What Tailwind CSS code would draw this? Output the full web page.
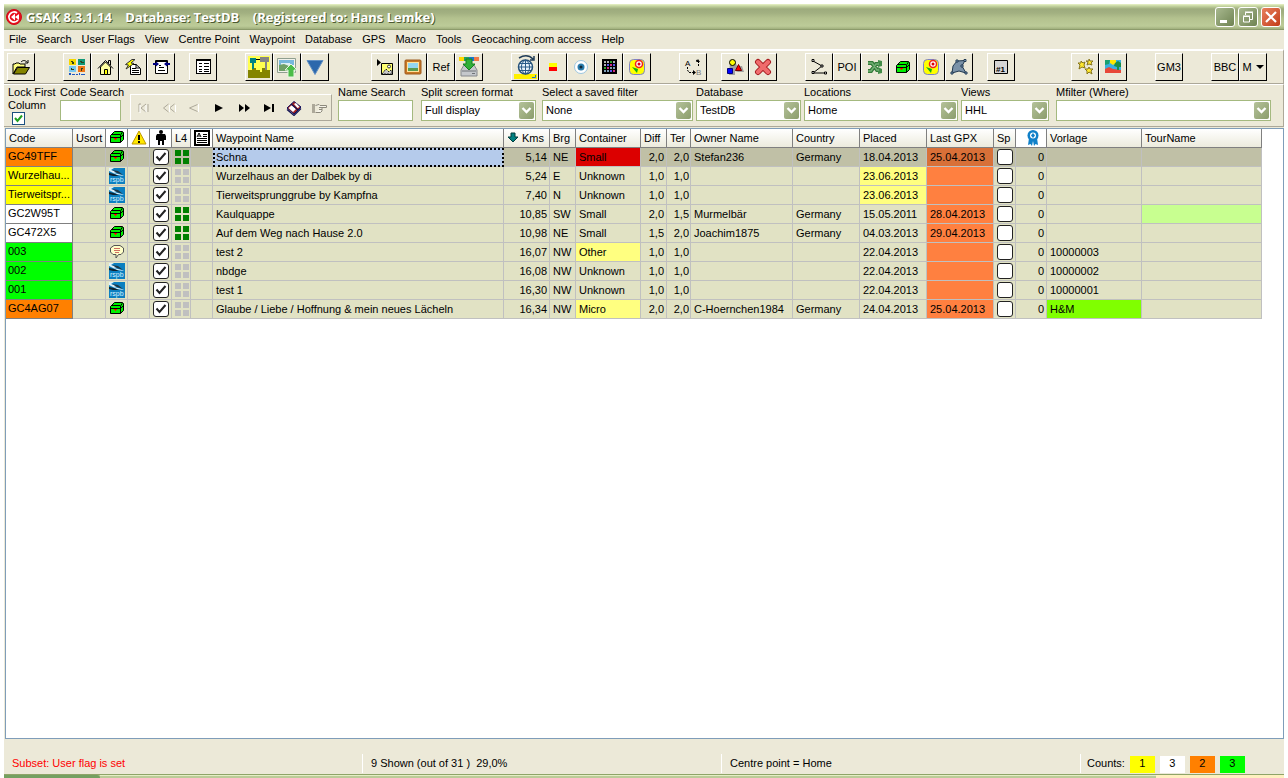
<!DOCTYPE html>
<html lang="en">

<head>
    <meta charset="UTF-8">
    <meta name="viewport" content="width=device-width, initial-scale=1.0">
    <title>GSAK 8.3.1.14 - TestDB</title>
    <script src="https://cdn.jsdelivr.net/npm/@tailwindcss/browser@4"></script>
</head>

<body class="bg-white h-screen overflow-hidden flex flex-col text-[11px] leading-[13px] text-black font-['Liberation_Sans',Arial,sans-serif]">

    <!-- Shared icons -->
    <svg class="hidden" aria-hidden="true">
        <symbol id="chest" viewBox="0 0 16 16">
            <path d="M1.500 5.500L5.500 1.500H13.500L14.500 2.500V9.500L11.500 12.500H1.500Z" fill="#00f000" stroke="#000" />
            <path d="M1.500 7.500H11.500L14.500 4.500M11.500 12.500V5L13.500 2M2 4.500H11" fill="none" stroke="#000" />
            <path d="M5 8H8V9H7V10H6V9H5Z" fill="#f00" />
        </symbol>
        <symbol id="rspb" viewBox="0 0 16 16">
            <rect width="16" height="16" fill="#0c7fc0" />
            <path d="M0 0H5L2 2L8 4L5 5L13 7L15 8L8 7L0 3Z" fill="#dff0fa" />
            <path d="M0 5L5 6L10 8L4 8L0 7Z" fill="#10222e" />
            <path d="M3 2L9 3L14 7L8 5Z" fill="#223642" />
            <text x="1" y="14" font-size="7" font-family="Liberation Sans" fill="#d8f2ff">rspb</text>
        </symbol>
        <symbol id="note" viewBox="0 0 16 16">
            <path d="M5 1.500H11L14.500 4V8L12 10.500H9.500L7 14V10.500H4L1.500 8V4Z" fill="#ffffc8" stroke="#555" />
            <path d="M5 4.500H11M5 6.500H11M6 8.500H10" stroke="#d07060" />
        </symbol>
        <symbol id="attrs" viewBox="0 0 14 14">
            <path d="M0 0H6V6H0ZM8 0H14V6H8ZM0 8H6V14H0ZM8 8H14V14H8Z" fill="currentColor" />
        </symbol>
        <symbol id="tick" viewBox="0 0 16 16">
            <path d="M3.500 7.500L6.500 11L12.500 4" fill="none" stroke="#222" stroke-width="2" />
        </symbol>
        <symbol id="chevron" viewBox="0 0 15 17">
            <path d="M3.500 6L7.500 10L11.500 6" fill="none" stroke="#fff" stroke-width="2.400" />
        </symbol>
        <symbol id="map" viewBox="1 1 26 26">
            <rect x="6.500" y="6.500" width="15" height="15" rx="4" fill="#ff0" stroke="#7d82c8" />
            <circle cx="16" cy="11" r="3.500" fill="#fff" stroke="#f02020" stroke-width="1.500" />
            <circle cx="16" cy="11" r="1.500" fill="#e00000" />
            <path d="M9 14L15 16L14 20Z" fill="#10b010" />
        </symbol>
    </svg>

    <main class="mx-1 mt-1 flex-1 min-h-0 flex flex-col bg-[#ece9d8]">

        <!-- Title bar -->
        <header class="h-[26px] shrink-0 flex items-center pl-[2px] pr-[3px] border-b border-[#8c9b6b] bg-[linear-gradient(#e9f3c8_0px,#c5d5a0_2px,#9dab7d_5px,#a2b081_9px,#b3c18e_14px,#bccb98_22px,#96a574_26px)]">
            <svg class="size-4 mr-1" viewBox="0 0 16 16" aria-hidden="true">
                <circle cx="8" cy="8" r="7.500" fill="#e8101c" stroke="#d00818" />
                <path d="M11 4A5 5 0 1 0 12 11" fill="none" stroke="#fff" stroke-width="1.800" />
                <path d="M5 8L9 4.500V11.500ZM9 8L13 5V11Z" fill="#fff" />
            </svg>
            <h1 class="flex-1 whitespace-pre text-white font-bold text-[13px] leading-4 font-['Open_Sans',sans-serif] [text-shadow:1px_1px_#4c5a30]">GSAK 8.3.1.14    Database: TestDB    (Registered to: Hans Lemke)</h1>
            <div class="flex gap-[3px]">
                <button aria-label="Minimize" class="size-5 rounded-[3px] border border-white bg-linear-to-br from-[#a9b990] to-[#6f8352]">
                    <svg class="size-[18px]" viewBox="0 0 18 18"><path d="M4 12H11V15H4Z" fill="#fff" /></svg>
                </button>
                <button aria-label="Restore" class="size-5 rounded-[3px] border border-white bg-linear-to-br from-[#a9b990] to-[#6f8352]">
                    <svg class="size-[18px]" viewBox="0 0 18 18"><path d="M6.500 7V4.500H13.500V11.500H11M4.500 8.500H10.500V14H4.500ZM4 8H11M6 4H14" fill="none" stroke="#fff" /></svg>
                </button>
                <button aria-label="Close" class="size-5 rounded-[3px] border border-white bg-linear-to-br from-[#e8805c] to-[#c23a12]">
                    <svg class="size-[18px]" viewBox="0 0 18 18"><path d="M4 4L14 14M14 4L4 14" stroke="#fff" stroke-width="2.200" /></svg>
                </button>
            </div>
        </header>

        <!-- Menu -->
        <nav class="h-[19px] shrink-0 flex items-center gap-[10px] pl-[5px]">
            <a href="#">File</a>
            <a href="#">Search</a>
            <a href="#">User Flags</a>
            <a href="#">View</a>
            <a href="#">Centre Point</a>
            <a href="#">Waypoint</a>
            <a href="#">Database</a>
            <a href="#">GPS</a>
            <a href="#">Macro</a>
            <a href="#">Tools</a>
            <a href="#">Geocaching.com access</a>
            <a href="#">Help</a>
        </nav>

        <!-- Toolbar -->
        <div class="h-[35px] shrink-0 flex pt-[2px] pl-[3px] border-t-2 border-r border-b border-t-white border-r-[#aca899] border-b-[#aca899] *:flex *:shrink-0 [&_button]:size-7 [&_button]:border [&_button]:border-t-white [&_button]:border-l-white [&_button]:border-r-black [&_button]:border-b-black [&_svg]:size-[26px]">
            <div>
                <button aria-label="Open database">
                    <svg viewBox="1 1 26 26"><path d="M6 11H8L9 10H12L13 11H18V14H10L6 21Z" fill="#ffff80" stroke="#000" /><path d="M6.500 21L10.500 14.500H22.500L18.500 21Z" fill="#848400" stroke="#000" /><path d="M14 9C16 7 18 7 20.500 9.500M21 7V10H18" fill="none" stroke="#000" /></svg>
                </button>
            </div>
            <div class="ml-7">
                <button aria-label="Geocaching.com">
                    <svg viewBox="1 1 26 26"><path d="M6 6H13V12H6Z" fill="#f5d800" /><path d="M15 6H22V12H15Z" fill="#109878" /><path d="M6 13H13V19H6Z" fill="#78c8f0" /><path d="M15 13H22V19H15Z" fill="#f07818" /><path d="M8 8H10V9H11V11H9V9H8ZM17 8H19V9H21V10H18V9H17ZM8 15H9V16H11V17H8ZM18 15H20V16H19V18H18Z" fill="#30401c" /><path d="M6 20H8V22H6ZM9 21H12V22H9ZM13 21H15V22H13ZM16 20H17V22H16ZM18 21H22V22H18Z" fill="#2058c0" /></svg>
                </button>
                <button aria-label="Home">
                    <svg viewBox="1 1 26 26"><path d="M9.500 14V21.500H19.500V14L14.500 9Z" fill="#ffffa0" stroke="#000" /><path d="M7 15.500L14.500 7.500L22 15.500M17.500 10V7.500H19.500V12" fill="none" stroke="#000" /><path d="M13.500 16.500H16.500V21.500H13.500Z" fill="#ff0" stroke="#000" /></svg>
                </button>
                <button aria-label="Quick page">
                    <svg viewBox="1 1 26 26"><path d="M11.500 11.500H17L21.500 15.500V21.500H11.500Z" fill="#fff" stroke="#000" /><path d="M13 15.500H17M13 17.500H20M13 19.500H20M17 11V15H21" fill="none" stroke="#000" /><path d="M13 6.500L6.500 11.500L9.500 12L7 16L15 10.500L12 10L16 6.500Z" fill="#ff0" stroke="#333" /></svg>
                </button>
                <button aria-label="Resize columns">
                    <svg viewBox="1 1 26 26"><path d="M8.500 7.500H20.500V20.500H8.500Z" fill="#fff" stroke="#000" /><path d="M8 8.500H21M12 14.500H17M11 17.500H18M12 12.500H14" stroke="#000" /><path d="M6 10H9V8.500L12 11L9 13.500V12H6ZM23 10H20V8.500L17 11L20 13.500V12H23Z" fill="#000084" /></svg>
                </button>
            </div>
            <div class="ml-[14px]">
                <button aria-label="Grid list">
                    <svg viewBox="1 1 26 26" shape-rendering="crispEdges"><path d="M7.500 6.500H21.500V20.500H7.500Z" fill="#fff" stroke="#000" /><path d="M7 7.500H22M10 10.500H13M15 10.500H20M10 13.500H13M15 13.500H20M10 16.500H13M15 16.500H20M10 18.500H13M15 18.500H20" stroke="#000" /></svg>
                </button>
            </div>
            <div class="ml-7">
                <button aria-label="Waypoint route">
                    <svg viewBox="1 1 26 26" shape-rendering="crispEdges"><path d="M3 3H25V25H3Z" fill="#ffff50" /><path d="M3 17H7V15H11V17H15V19H17V15H20V17H25V25H3Z" fill="#848400" /><path d="M5 5H11V10H9V16H7V10H5Z" fill="#008484" /><path d="M11 6H15V7H11Z" fill="#000" /><path d="M15 4H24V9H22V17H20V9H15Z" fill="#848484" /></svg>
                </button>
                <button aria-label="Upload picture">
                    <svg viewBox="1 1 26 26"><path d="M4.500 5.500H22.500V19.500H4.500Z" fill="#f2f2ea" stroke="#8f9f90" /><path d="M6 7H21V12H6Z" fill="#78b8dc" /><path d="M8 10H17V12H8Z" fill="#dff0f5" /><path d="M6 12L11 11L21 15V18H6Z" fill="#70a068" /><path d="M18 11L24 17H21V24H15V17H12Z" fill="#4cbc48" stroke="#e6f5e2" /></svg>
                </button>
                <button aria-label="Filter">
                    <svg viewBox="1 1 26 26"><path d="M6 7.500H22L14 21.500Z" fill="#2c68ac" stroke="#6190c4" /></svg>
                </button>
            </div>
            <div class="ml-[42px]">
                <button aria-label="Play image">
                    <svg viewBox="1 1 26 26"><path d="M6 6L10 9.500L6 13Z" fill="#000" /><path d="M10.500 10.500H21.500V21.500H10.500Z" fill="#ffff70" stroke="#000" /><path d="M11 21L15 16L18 19L20 17L21 18V21Z" fill="#c8c8c8" stroke="#222" stroke-dasharray="2 1" /><circle cx="18" cy="13.500" r="1.500" fill="#fff" stroke="#333" /></svg>
                </button>
                <button aria-label="Image frame">
                    <svg viewBox="1 1 26 26"><rect x="6" y="7" width="16" height="14" rx="1" fill="#c87824" stroke="#9c581c" /><path d="M8 9H20V19H8Z" fill="#ffe29c" /><path d="M9 10H19V15H9Z" fill="#94d6f0" /><path d="M9 15H19V18H9Z" fill="#5a9c50" /></svg>
                </button>
                <button>Ref</button>
                <button aria-label="Download">
                    <svg viewBox="1 1 26 26"><path d="M4 4H9V8H4Z" fill="#ffd800" /><path d="M9 4H14V8H9Z" fill="#20a060" /><path d="M14 4H19V8H14Z" fill="#1878d0" /><path d="M19 4H24V8H19Z" fill="#f07848" /><path d="M9 12H19L22 17V23H6V17Z" fill="#c5c8cc" stroke="#85888c" /><path d="M7 18H21M17 20.500H20" stroke="#707478" /><path d="M11 6H17V11H20L14 17L8 11H11Z" fill="#30b038" stroke="#168020" /></svg>
                </button>
            </div>
            <div class="ml-7">
                <button aria-label="Online map">
                    <svg viewBox="1 1 26 26"><path d="M3 21H26V26H3Z" fill="#fff000" /><circle cx="14.500" cy="14" r="7" fill="#e9f3fb" stroke="#245078" stroke-width="1.500" /><path d="M7.500 14H22M9 10.500H20M9 17.500H20M14.500 7V21M14.500 7C9 10 9 18 14.500 21M14.500 7C20 10 20 18 14.500 21" fill="none" stroke="#285a88" /><path d="M8 5C13 2 18 2 22 6M23 3V7H19" fill="none" stroke="#203c58" stroke-width="1.500" /><path d="M24.500 22V24.500H21" fill="none" stroke="#2070d0" /></svg>
                </button>
                <button aria-label="Flag colour">
                    <svg viewBox="1 1 26 26"><path d="M10 10H18V14H10Z" fill="#ff0" /><path d="M10 14H18V18H10Z" fill="#f00" /></svg>
                </button>
                <button aria-label="Target">
                    <svg viewBox="1 1 26 26"><circle cx="14" cy="14" r="6.500" fill="#fff" stroke="#9cc6e0" /><circle cx="14" cy="14" r="3.500" fill="#2b7eae" /><circle cx="14" cy="14" r="1.500" fill="#102838" /></svg>
                </button>
                <button aria-label="Colour grid">
                    <svg viewBox="1 1 26 26" shape-rendering="crispEdges"><path d="M7 6H22V21H7Z" fill="#000" /><path d="M9 8h2v2h-2zM12 8h2v2h-2zM18 8h2v2h-2zM9 11h2v2h-2z" fill="#b0b0b0" /><path d="M15 8h2v2h-2zM9 14h2v2h-2z" fill="#30a030" /><path d="M12 11h2v2h-2zM18 11h2v2h-2zM15 17h2v2h-2z" fill="#5858f0" /><path d="M15 11h2v2h-2zM12 14h2v2h-2zM18 17h2v2h-2z" fill="#d03080" /><path d="M15 14h2v2h-2zM18 14h2v2h-2zM9 17h2v2h-2zM12 17h2v2h-2z" fill="#80a0b8" /></svg>
                </button>
                <button aria-label="Map"><svg><use href="#map" /></svg></button>
            </div>
            <div class="ml-7">
                <button aria-label="Swap A and B">
                    <svg viewBox="1 1 26 26"><text x="6" y="13" font-size="8" font-family="Liberation Sans" fill="#000">A</text><text x="17" y="22" font-size="8" font-family="Liberation Sans" fill="#777">B</text><path d="M8.500 14V17L10 19.500H14M19.500 13V9L17 7" fill="none" stroke="#000" stroke-dasharray="2 1" /><path d="M14 17L17 19.500L14 22ZM17 9L19 6L21 9Z" fill="#000" /></svg>
                </button>
            </div>
            <div class="ml-[14px]">
                <button aria-label="Shapes">
                    <svg viewBox="1 1 26 26"><path d="M9 9L14 8L16 13H21L23 19H17L14 18V22H8Z" fill="#a0a0a0" /><circle cx="11.500" cy="9.500" r="3" fill="#ff0" stroke="#000" /><path d="M6.500 15.500H11.500V20.500H6.500Z" fill="#00f" stroke="#000080" /><path d="M14.500 17.500L17.500 11.500L20.500 17.500Z" fill="#f00" stroke="#700" /></svg>
                </button>
                <button aria-label="Delete">
                    <svg viewBox="1 1 26 26"><path d="M9 9L19 19M19 9L9 19" stroke="#a81c20" stroke-width="6" stroke-linecap="round" /><path d="M9 9L19 19M19 9L9 19" stroke="#f06c6c" stroke-width="4" stroke-linecap="round" /></svg>
                </button>
            </div>
            <div class="ml-7">
                <button aria-label="Polyline">
                    <svg viewBox="1 1 26 26"><path d="M8 8L17 13L8 20H20" fill="none" stroke="#000" /><path d="M7 6.500H9V8.500H7ZM16 12H18V14H16ZM7 18.500H9V20.500H7ZM19.500 19H21.500V21H19.500Z" fill="#fff" stroke="#000" /></svg>
                </button>
                <button>POI</button>
                <button aria-label="Convert">
                    <svg viewBox="1 1 26 26"><path d="M7 10H11L16 17H18M7 18H10L15 11H18" fill="none" stroke="#327a38" stroke-width="4" /><path d="M17 7L21 8V13L17 14ZM17 14L21 16V20L17 21Z" fill="#428c48" /><path d="M7 10H11L16 17H18M7 18H10L15 11H18" fill="none" stroke="#72b074" stroke-width="1.500" /></svg>
                </button>
                <button aria-label="Cache">
                    <svg viewBox="-5 -6 26 26"><use href="#chest" width="16" height="16" /></svg>
                </button>
                <button aria-label="Map"><svg><use href="#map" /></svg></button>
                <button aria-label="Polygon">
                    <svg viewBox="1 1 26 26"><path d="M7 20L8 13L12 8L20 7.500L17 13L21 20L14 18Z" fill="#7b92a8" stroke="#203850" /><path d="M11 7H13V9H11ZM19 6.500H21V8.500H19ZM16 12H18V14H16ZM20 19H22V21H20ZM6 19H8V21H6Z" fill="#a8c8e8" stroke="#203850" /></svg>
                </button>
            </div>
            <div class="ml-[14px]">
                <button aria-label="Number one">
                    <svg viewBox="1 1 26 26"><path d="M7.500 7.500H20.500V20.500H7.500Z" fill="#d6d6d6" stroke="#000" /><text x="9" y="19" font-size="8" font-weight="bold" font-family="Liberation Sans">#1</text></svg>
                </button>
            </div>
            <div class="ml-14">
                <button aria-label="Favourites">
                    <svg viewBox="1 1 26 26"><g fill="#ffe830" stroke="#86751c"><path d="M10 8L12 10L14 9L13 12L14 15L11 14L8 16L9 12L7 10L10 10Z" /><path d="M18 6L19 8L22 8L20 10L21 12L18 11L16 12L17 9L15 8L18 8Z" /><path d="M18 14L19 16L22 16L20 18L21 21L18 19L16 21L16 18L14 16L17 16Z" /></g></svg>
                </button>
                <button aria-label="Picture">
                    <svg viewBox="1 1 26 26"><path d="M6 7H22V20H6Z" fill="#38b0e0" /><path d="M11 7H17V10L14 12L11 10Z" fill="#ffe800" /><path d="M6 7H11L10 11L6 12Z" fill="#18a070" /><path d="M6 16L10 14L14 16L22 17V20H6Z" fill="#e84838" /><path d="M16 10L19 8L22 10V14H20V17H18V14L15 13Z" fill="#189048" /></svg>
                </button>
            </div>
            <div class="ml-7">
                <button>GM3</button>
            </div>
            <div class="ml-7">
                <button>BBC</button>
                <button class="flex items-center justify-center gap-1">M <span class="border-x-4 border-t-4 border-x-transparent border-t-black"></span></button>
            </div>
        </div>

        <!-- Search and filter row -->
        <div class="h-[43px] shrink-0 flex items-start pt-px pl-1 pr-3 border-t border-r border-b border-t-white border-r-[#aca899] border-b-[#aca899] [&_input]:bg-white [&_select]:bg-white">
            <div class="w-[52px] shrink-0">
                <label for="lockFirst" class="block whitespace-nowrap">Lock First<br>Column</label>
                <div class="relative size-[13px] ml-1">
                    <input id="lockFirst" type="checkbox" checked class="block appearance-none size-[13px] border border-[#1c5180]">
                    <svg class="absolute inset-0 size-[13px] pointer-events-none" viewBox="0 0 13 13"><path d="M3 6L5.500 9L10 3.500" fill="none" stroke="#21a121" stroke-width="2" /></svg>
                </div>
            </div>
            <div class="w-[70px] shrink-0">
                <label for="codeSearch" class="block h-[14px] whitespace-nowrap">Code Search</label>
                <input id="codeSearch" type="text" class="block w-[61px] h-[21px] border border-[#a4b97f] px-1">
            </div>
            <div class="flex mt-2 mr-[6px] h-[27px] border border-t-white border-l-white border-r-[#aca899] border-b-[#aca899] [&_button]:w-[25px] [&_svg]:mx-auto [&_svg]:size-4">
                <button aria-label="First"><svg viewBox="0 0 16 16"><path d="M3 4V12M5 8L10 4M5 8L10 12M12 4V12M3 4H5" fill="none" stroke="#aca899" /><path d="M4 5V13M10 5V12" stroke="#fff" /></svg></button>
                <button aria-label="Page back"><svg viewBox="0 0 16 16"><path d="M7.500 4L2.500 8L7.500 12M13.500 4L8.500 8L13.500 12" fill="none" stroke="#aca899" /><path d="M8.500 5V12M14.500 5V12" stroke="#fff" /></svg></button>
                <button aria-label="Back"><svg viewBox="0 0 16 16"><path d="M11.500 4.500L3.500 8L11.500 11.500" fill="none" stroke="#aca899" /><path d="M12.500 4V12" stroke="#fff" /></svg></button>
                <button aria-label="Next"><svg viewBox="0 0 16 16"><path d="M4 4L12 8L4 12Z" /></svg></button>
                <button aria-label="Page forward"><svg viewBox="0 0 16 16"><path d="M3 4L8 8L3 12ZM9 4L14 8L9 12Z" /></svg></button>
                <button aria-label="Last"><svg viewBox="0 0 16 16"><path d="M3 4L10 8L3 12ZM11 4H13V12H11Z" /></svg></button>
                <button aria-label="Bookmark"><svg viewBox="0 0 16 16"><path d="M1 8L8 1.500L15 7L8 14Z" fill="#a02020" stroke="#101060" /><path d="M2.500 8L6 5L10 9L7 12ZM8 4L10 3L13.500 7L11.500 8Z" fill="#fff" /><path d="M1 9.500L8 15.500L15 8.500M5 4L12 10" fill="none" stroke="#101050" stroke-width="1.200" /></svg></button>
                <button aria-label="Go to"><svg viewBox="0 0 16 16"><path d="M1 4H4V13H1Z" fill="#aca899" /><path d="M4.500 5.500L8 4.500L9 5.500H15.500V7.500H10M4.500 12.500H9.500L11 11V7.500M8 9.500H11M8 7.500H11" fill="#f6f4ea" stroke="#8c897c" /></svg></button>
            </div>
            <div class="w-[83px] shrink-0">
                <label for="nameSearch" class="block h-[14px] whitespace-nowrap">Name Search</label>
                <input id="nameSearch" type="text" class="block w-[75px] h-[21px] border border-[#a4b97f] px-1">
            </div>
            <div class="w-[115px] mr-[6px] shrink-0">
                <label for="splitScreen" class="block h-[14px] whitespace-nowrap">Split screen format</label>
                <div class="relative">
                    <select id="splitScreen" class="block appearance-none w-full h-[21px] border border-[#a4b97f] pl-[3px]">
                        <option>Full display</option>
                    </select>
                    <svg class="absolute right-[2px] top-[2px] w-[15px] h-[17px] rounded-[2px] bg-linear-to-br from-[#b5c29a] to-[#8b9d6c] pointer-events-none"><use href="#chevron" /></svg>
                </div>
            </div>
            <div class="w-[151px] mr-[3px] shrink-0">
                <label for="savedFilter" class="block h-[14px] whitespace-nowrap">Select a saved filter</label>
                <div class="relative">
                    <select id="savedFilter" class="block appearance-none w-full h-[21px] border border-[#a4b97f] pl-[3px]">
                        <option>None</option>
                    </select>
                    <svg class="absolute right-[2px] top-[2px] w-[15px] h-[17px] rounded-[2px] bg-linear-to-br from-[#b5c29a] to-[#8b9d6c] pointer-events-none"><use href="#chevron" /></svg>
                </div>
            </div>
            <div class="w-[105px] mr-[3px] shrink-0">
                <label for="database" class="block h-[14px] whitespace-nowrap">Database</label>
                <div class="relative">
                    <select id="database" class="block appearance-none w-full h-[21px] border border-[#a4b97f] pl-[3px]">
                        <option>TestDB</option>
                    </select>
                    <svg class="absolute right-[2px] top-[2px] w-[15px] h-[17px] rounded-[2px] bg-linear-to-br from-[#b5c29a] to-[#8b9d6c] pointer-events-none"><use href="#chevron" /></svg>
                </div>
            </div>
            <div class="w-[154px] mr-[3px] shrink-0">
                <label for="locations" class="block h-[14px] whitespace-nowrap">Locations</label>
                <div class="relative">
                    <select id="locations" class="block appearance-none w-full h-[21px] border border-[#a4b97f] pl-[3px]">
                        <option>Home</option>
                    </select>
                    <svg class="absolute right-[2px] top-[2px] w-[15px] h-[17px] rounded-[2px] bg-linear-to-br from-[#b5c29a] to-[#8b9d6c] pointer-events-none"><use href="#chevron" /></svg>
                </div>
            </div>
            <div class="w-[88px] mr-[7px] shrink-0">
                <label for="views" class="block h-[14px] whitespace-nowrap">Views</label>
                <div class="relative">
                    <select id="views" class="block appearance-none w-full h-[21px] border border-[#a4b97f] pl-[3px]">
                        <option>HHL</option>
                    </select>
                    <svg class="absolute right-[2px] top-[2px] w-[15px] h-[17px] rounded-[2px] bg-linear-to-br from-[#b5c29a] to-[#8b9d6c] pointer-events-none"><use href="#chevron" /></svg>
                </div>
            </div>
            <div class="flex-1">
                <label for="mfilter" class="block h-[14px] whitespace-nowrap">Mfilter (Where)</label>
                <div class="relative">
                    <select id="mfilter" class="block appearance-none w-full h-[21px] border border-[#a4b97f] pl-[3px]">
                        <option></option>
                    </select>
                    <svg class="absolute right-[2px] top-[2px] w-[15px] h-[17px] rounded-[2px] bg-linear-to-br from-[#b5c29a] to-[#8b9d6c] pointer-events-none"><use href="#chevron" /></svg>
                </div>
            </div>
        </div>

        <!-- Waypoint grid -->
        <div class="flex-1 min-h-0 ml-px mt-px bg-white border border-[#7f9db9] overflow-hidden">
            <table class="table-fixed border-separate border-spacing-0 w-[1256px]">
                <colgroup>
                    <col class="w-[67px]">
                    <col class="w-[33px]">
                    <col class="w-[22px]">
                    <col class="w-[22px]">
                    <col class="w-[22px]">
                    <col class="w-[19px]">
                    <col class="w-[22px]">
                    <col class="w-[291px]">
                    <col class="w-[46px]">
                    <col class="w-[26px]">
                    <col class="w-[65px]">
                    <col class="w-[26px]">
                    <col class="w-[24px]">
                    <col class="w-[102px]">
                    <col class="w-[67px]">
                    <col class="w-[67px]">
                    <col class="w-[67px]">
                    <col class="w-[22px]">
                    <col class="w-[31px]">
                    <col class="w-[95px]">
                    <col class="w-[120px]">
                </colgroup>
                <thead>
                    <tr class="h-[19px] bg-linear-to-b from-white to-[#ebeadb] [&>th]:p-0 [&>th]:pl-[3px] [&>th]:h-[19px] [&>th]:font-normal [&>th]:text-left [&>th]:whitespace-nowrap [&>th]:border-r [&>th]:border-b [&>th]:border-[#808080] [&_svg]:block">
                        <th>Code</th>
                        <th>Usort</th>
                        <th class="bg-white" aria-label="Type"><svg class="size-4"><use href="#chest" /></svg></th>
                        <th class="bg-white" aria-label="Warning">
                            <svg class="size-4" viewBox="0 0 16 16"><path d="M8 1L15 14H1Z" fill="#ffe800" stroke="#c09800" stroke-linejoin="round" /><path d="M7 5H9V10H7ZM7 11H9V13H7Z" /></svg>
                        </th>
                        <th class="bg-white" aria-label="User flag">
                            <svg class="size-4" viewBox="0 0 16 16"><circle cx="8" cy="2" r="2" /><path d="M4 4H12L13 6V10H11V15H9V11H7V15H5V10H3V6Z" /></svg>
                        </th>
                        <th>L4</th>
                        <th class="bg-white" aria-label="Notes">
                            <svg class="size-4" viewBox="0 0 16 16"><path d="M1 1H15V15H1Z" fill="#fff" stroke="#000" stroke-width="2" /><path d="M3 7L5 3L7 7M4 6H6M9 4.500H13M9 6.500H13M3 8.500H13M3 10.500H13M3 12.500H13" fill="none" stroke="#000" /></svg>
                        </th>
                        <th>Waypoint Name</th>
                        <th>
                            <div class="flex items-center justify-between pr-[5px]">
                                <svg class="size-3" viewBox="0 0 12 12"><path d="M4 1H8V5H11L6 10L1 5H4Z" fill="#008080" stroke="#003c3c" /></svg>
                                Kms
                            </div>
                        </th>
                        <th>Brg</th>
                        <th>Container</th>
                        <th>Diff</th>
                        <th>Ter</th>
                        <th>Owner Name</th>
                        <th>Country</th>
                        <th>Placed</th>
                        <th>Last GPX</th>
                        <th>Sp</th>
                        <th class="bg-white" aria-label="Favorite points">
                            <svg class="size-4 mx-auto" viewBox="0 0 16 16"><path d="M4 8L3 15L5.500 14L7 16L8 11L9 16L10.500 14L13 15L12 8Z" fill="#1080c8" /><circle cx="8" cy="5.500" r="5.500" fill="#1080c8" /><circle cx="8" cy="5.500" r="3" fill="#fff" /><path d="M8 3L10 5.500L8 8L6 5.500Z" fill="#1080c8" /></svg>
                        </th>
                        <th>Vorlage</th>
                        <th>TourName</th>
                    </tr>
                </thead>
                <tbody id="waypoints" class="[&_td]:p-0 [&_td]:h-[19px] [&_td]:pl-[3px] [&_td]:whitespace-nowrap [&_td]:overflow-hidden [&_td]:border-r [&_td]:border-b [&_td]:border-[#c0c0c0] [&_td:first-child]:border-[#808080]"></tbody>
            </table>
        </div>

        <!-- Status bar -->
        <footer class="h-[35px] shrink-0 pt-[15px] flex leading-[19px] [&>div]:h-[19px]">
            <div class="w-[358px] pl-2 text-[#f00]">Subset: User flag is set</div>
            <div class="w-[359px] pl-2 border-l border-white whitespace-pre">9 Shown (out of 31 )  29,0%</div>
            <div class="flex-1 pl-2 border-l border-white">Centre point = Home</div>
            <div class="w-[204px] pl-[6px] border-l border-white flex gap-[5px] [&>span]:w-[25px] [&>span]:h-[17px] [&>span]:mt-[2px] [&>span]:leading-[15px] [&>span]:text-center">
                <p>Counts:</p>
                <span class="bg-[#ff0]">1</span>
                <span class="bg-white">3</span>
                <span class="bg-[#ff8000]">2</span>
                <span class="bg-[#0f0]">3</span>
            </div>
        </footer>
    </main>

    <!-- Top edge of the taskbar -->
    <div class="h-1 mx-1 shrink-0 flex border-t border-[#8fa468] bg-[#bccb98]">
        <div class="w-24 rounded-tr bg-[#74a060]"></div>
        <div class="flex-1 border-t border-[#e4eec4]"></div>
        <div class="w-32 bg-[#fff0c0]"></div>
    </div>

    <script>
        // code, flag colour, type, has logs, name, kms, brg, container, diff, ter, owner, country, placed, last gpx, vorlage
        const rows = [
            ["GC49TFF", "orange", "chest", true, "Schna", "5,14", "NE", "Small", "2,0", "2,0", "Stefan236", "Germany", "18.04.2013", "25.04.2013", ""],
            ["Wurzelhau...", "yellow", "rspb", false, "Wurzelhaus an der Dalbek by di", "5,24", "E", "Unknown", "1,0", "1,0", "", "", "23.06.2013", "", ""],
            ["Tierweitspr...", "yellow", "rspb", false, "Tierweitsprunggrube by Kampfna", "7,40", "N", "Unknown", "1,0", "1,0", "", "", "23.06.2013", "", ""],
            ["GC2W95T", "white", "chest", true, "Kaulquappe", "10,85", "SW", "Small", "2,0", "1,5", "Murmelbär", "Germany", "15.05.2011", "28.04.2013", ""],
            ["GC472X5", "white", "chest", true, "Auf dem Weg nach Hause 2.0", "10,98", "NE", "Small", "1,5", "2,0", "Joachim1875", "Germany", "04.03.2013", "29.04.2013", ""],
            ["003", "green", "note", false, "test 2", "16,07", "NW", "Other", "1,0", "1,0", "", "", "22.04.2013", "", "10000003"],
            ["002", "green", "rspb", false, "nbdge", "16,08", "NW", "Unknown", "1,0", "1,0", "", "", "22.04.2013", "", "10000002"],
            ["001", "green", "rspb", false, "test 1", "16,30", "NW", "Unknown", "1,0", "1,0", "", "", "22.04.2013", "", "10000001"],
            ["GC4AG07", "orange", "chest", false, "Glaube / Liebe / Hoffnung & mein neues Lächeln", "16,34", "NW", "Micro", "2,0", "2,0", "C-Hoernchen1984", "Germany", "24.04.2013", "25.04.2013", "H&M"]
        ];
        const flagColors = { orange: "bg-[#ff8000]", yellow: "bg-[#ff0]", white: "bg-white", green: "bg-[#0f0]" };
        const esc = text => text.replace(/&/g, "&amp;");

        document.getElementById("waypoints").innerHTML = rows.map((r, i) => {
            const [code, flag, type, logs, name, kms, brg, container, diff, ter, owner, country, placed, gpx, vorlage] = r;
            const selected = i === 0;
            let containerBg = "";
            if (selected) containerBg = "bg-[#dc0000]";
            else if (container === "Other" || container === "Micro") containerBg = "bg-[#ffff80]";
            return `
                <tr class="${selected ? "bg-[#c0c0a6]" : "bg-[#e1e2c4]"}">
                    <td class="${flagColors[flag]}"><div class="-ml-px pb-[2px]">${code}</div></td>
                    <td></td>
                    <td><svg class="block size-4"><use href="#${type}" /></svg></td>
                    <td></td>
                    <td>
                        <div class="relative size-4">
                            <input type="checkbox" checked aria-label="User flag ${code}" class="block appearance-none size-4 rounded-[3px] border border-[#222] bg-white">
                            <svg class="absolute inset-0 size-4 pointer-events-none"><use href="#tick" /></svg>
                        </div>
                    </td>
                    <td><svg class="block size-[14px] ${logs ? "text-[#008000]" : "text-[#c0c0c0]"}"><use href="#attrs" /></svg></td>
                    <td></td>
                    <td class="${selected ? "bg-[#b5cbeb] outline-2 outline-dotted outline-black -outline-offset-2" : ""}">${esc(name)}</td>
                    <td class="text-right"><div class="pr-[2px]">${kms}</div></td>
                    <td>${brg}</td>
                    <td class="${containerBg}">${container}</td>
                    <td class="text-right"><div class="pr-[2px]">${diff}</div></td>
                    <td class="text-right"><div class="pr-px">${ter}</div></td>
                    <td>${owner}</td>
                    <td>${country}</td>
                    <td class="${placed === "23.06.2013" ? "bg-[#ffff80]" : ""}">${placed}</td>
                    <td class="${selected ? "bg-[#d87038]" : "bg-[#ff8040]"}">${gpx}</td>
                    <td><input type="checkbox" aria-label="Sp ${code}" class="block appearance-none size-4 rounded-[3px] border border-[#222] bg-white"></td>
                    <td class="text-right"><div class="pr-[2px]">0</div></td>
                    <td class="${vorlage === "H&M" ? "bg-[#80ff00]" : ""}">${esc(vorlage)}</td>
                    <td class="${code === "GC2W95T" ? "bg-[#c8ff90]" : ""}"></td>
                </tr>`;
        }).join("");
    </script>
</body>

</html>
